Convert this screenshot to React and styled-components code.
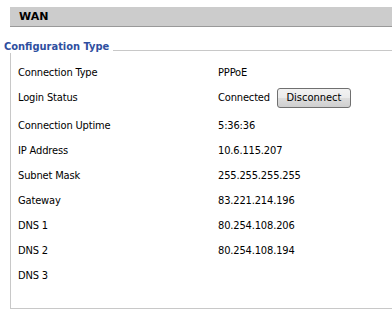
import React from "react";
import styled, { createGlobalStyle } from "styled-components";

const Global = createGlobalStyle`
  html, body {
    margin: 0;
    padding: 0;
    background: #ffffff;
  }
  body {
    font-family: "DejaVu Sans Condensed", "DejaVu Sans", sans-serif;
    font-size: 11px;
    color: #000000;
    overflow: hidden;
  }
`;

const rows = [
  { label: "Connection Type", value: "PPPoE" },
  { label: "Login Status", value: "Connected", action: "Disconnect" },
  { label: "Connection Uptime", value: "5:36:36" },
  { label: "IP Address", value: "10.6.115.207" },
  { label: "Subnet Mask", value: "255.255.255.255" },
  { label: "Gateway", value: "83.221.214.196" },
  { label: "DNS 1", value: "80.254.108.206" },
  { label: "DNS 2", value: "80.254.108.194" },
  { label: "DNS 3", value: "" },
];

const App = () => {
  return (
    <Page>
      <Global />
      <HeaderBar>WAN</HeaderBar>
      <Section>
        <LegendRow>
          <Legend>Configuration Type</Legend>
          <LegendLine />
        </LegendRow>
        <Box>
          {rows.map((r) => (
            <Row key={r.label} $tall={!!r.action}>
              <Label>{r.label}</Label>
              <Value>
                {r.value}
                {r.action && <Button>{r.action}</Button>}
              </Value>
            </Row>
          ))}
        </Box>
      </Section>
    </Page>
  );
};

const Page = styled.div`
  padding-top: 7px;
  overflow: hidden;
`;

const HeaderBar = styled.div`
  margin-left: 10px;
  height: 19px;
  background: #cccccc;
  border-bottom: 1px solid #999999;
  padding-left: 9px;
  display: flex;
  align-items: center;
  font-family: "DejaVu Sans", sans-serif;
  font-weight: bold;
  font-size: 11px;
  letter-spacing: 0.1px;
`;

const Section = styled.div`
  margin-top: 13px;
`;

const LegendRow = styled.div`
  display: flex;
  align-items: center;
  padding-left: 4px;
  height: 13px;
`;

const Legend = styled.span`
  color: #2f4f9f;
  font-weight: bold;
  font-size: 11px;
  padding-right: 4px;
`;

const LegendLine = styled.div`
  flex: 1;
  height: 1px;
  background: #c8c8c8;
  margin-top: 8px;
`;

const Box = styled.div`
  margin-left: 10px;
  border-left: 1px solid #c8c8c8;
  border-bottom: 1px solid #c8c8c8;
  padding: 7px 0 20px 7px;
`;

const Row = styled.div`
  display: grid;
  grid-template-columns: 200px 1fr;
  align-items: center;
  box-sizing: border-box;
  height: ${(p) => (p.$tall ? 28 : 25)}px;
  padding-bottom: ${(p) => (p.$tall ? 3 : 0)}px;
  letter-spacing: -0.15px;
`;

const Label = styled.div``;

const Value = styled.div`
  display: flex;
  align-items: center;
  gap: 7px;
`;

const Button = styled.button`
  height: 20px;
  width: 74px;
  padding: 0;
  font-family: inherit;
  font-size: 11px;
  color: #000;
  border: 1px solid #707070;
  border-radius: 3px;
  background: linear-gradient(#f2f2f2 0%, #ebebeb 50%, #dddddd 51%, #cfcfcf 100%);
`;

export default App;
